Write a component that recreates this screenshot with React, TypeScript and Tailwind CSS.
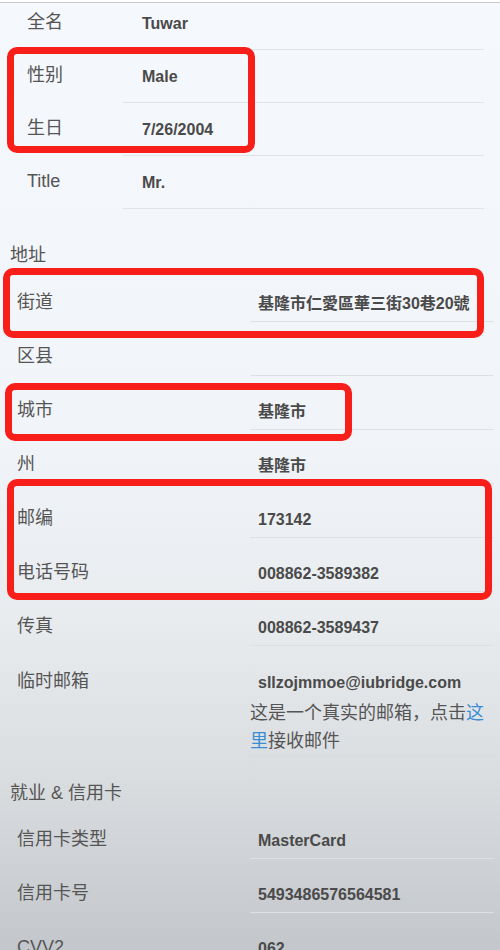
import React from 'react'

const font = "font-['Liberation_Sans','Noto_Sans_CJK_SC',sans-serif]"

interface RowProps {
  label: string
  value?: string
  first?: boolean
}

// top section: narrow label column, divider under value column only
function ProfileRow({ label, value, first }: RowProps) {
  return (
    <div className={first ? 'flex h-[47px]' : 'flex h-[53px]'}>
      <div
        className={`w-[123px] shrink-0 pl-[27px] text-[18px] leading-6 text-[#555] ${first ? 'pt-[7px]' : 'pt-[13px]'}`}
      >
        {label}
      </div>
      <div
        className={`mr-[16px] flex-1 border-b border-[#e0e4e9] pl-[19px] text-[16px] font-bold leading-6 text-[#4a4a4a] ${first ? 'pt-[9px]' : 'pt-[15px]'}`}
      >
        {value}
      </div>
    </div>
  )
}

function InfoRow({ label, value }: RowProps) {
  return (
    <div className="flex h-[54px]">
      <div className="w-[250px] shrink-0 pl-[17px] pt-[22px] text-[18px] leading-6 text-[#555]">
        {label}
      </div>
      <div className="mr-[6px] flex-1 border-b border-[#dde1e6] pl-[8px] pt-[24px] text-[16px] font-bold leading-6 text-[#4a4a4a]">
        {value}
      </div>
    </div>
  )
}

function SectionTitle({ children }: { children: React.ReactNode }) {
  return <div className="h-[24px] pl-[10px] text-[18px] leading-6 text-[#555]">{children}</div>
}

// red annotation frames drawn over the screenshot
const frames = [
  'left-[7px] top-[47px] w-[248px] h-[106px]',
  'left-[3px] top-[268px] w-[481px] h-[70px]',
  'left-[5px] top-[383px] w-[347px] h-[58px]',
  'left-[7px] top-[479px] w-[485px] h-[121px]',
]

export default function App() {
  return (
    <div
      className={`relative h-[950px] w-[500px] overflow-hidden bg-[linear-gradient(to_bottom,#f5f8fc_0%,#f1f4f8_45%,#e9ecef_65%,#dadde0_82%,#c3c6ca_100%)] ${font}`}
    >
      <div className="h-[2px] bg-white" />
      <div className="h-px bg-[#c9c9c9]" />

      {/* Personal */}
      <div>
        <ProfileRow first label="全名" value="Tuwar" />
        <ProfileRow label="性别" value="Male" />
        <ProfileRow label="生日" value="7/26/2004" />
        <ProfileRow label="Title" value="Mr." />
      </div>

      {/* Address */}
      <div className="mt-[34px]">
        <SectionTitle>地址</SectionTitle>
        <div className="mt-px">
          <InfoRow label="街道" value="基隆市仁愛區華三街30巷20號" />
          <InfoRow label="区县" value="" />
          <InfoRow label="城市" value="基隆市" />
          <InfoRow label="州" value="基隆市" />
          <InfoRow label="邮编" value="173142" />
          <InfoRow label="电话号码" value="008862-3589382" />
          <InfoRow label="传真" value="008862-3589437" />
          <div className="flex">
            <div className="w-[250px] shrink-0 pl-[17px] pt-[23px] text-[18px] leading-6 text-[#555]">
              临时邮箱
            </div>
            <div className="mr-[6px] flex-1 border-b border-[#d8dce0] pt-[25px]">
              <div className="pl-[8px] text-[16px] font-bold leading-6 text-[#4a4a4a]">
                sllzojmmoe@iubridge.com
              </div>
              <p className="mt-[4px] w-[242px] text-[18px] leading-[28px] text-[#555]">
                这是一个真实的邮箱，点击<span className="text-[#3a8dd3]">这里</span>接收邮件
              </p>
            </div>
          </div>
        </div>
      </div>

      {/* Employment & card */}
      <div className="mt-[25px]">
        <SectionTitle>就业 &amp; 信用卡</SectionTitle>
        <InfoRow label="信用卡类型" value="MasterCard" />
        <InfoRow label="信用卡号" value="5493486576564581" />
        <InfoRow label="CVV2" value="062" />
      </div>

      {frames.map((f) => (
        <div
          key={f}
          className={`pointer-events-none absolute rounded-[10px] border-[7px] border-[#f81e1a] ${f}`}
        />
      ))}
    </div>
  )
}
